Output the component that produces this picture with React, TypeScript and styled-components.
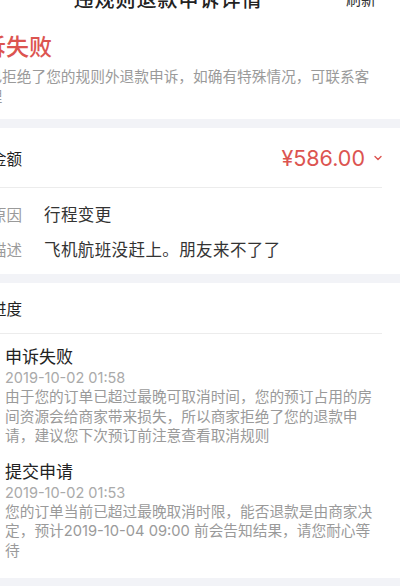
import styled, { createGlobalStyle } from "styled-components";

const GlobalStyle = createGlobalStyle`
  html, body {
    margin: 0;
    padding: 0;
    background: #f2f3f7;
    overflow-x: hidden;
  }
  body {
    font-family: Inter, "Noto Sans CJK SC", sans-serif;
    color: #222;
  }
`;

const Page = styled.div`
  margin-left: -56px;
  width: calc(100% + 56px);
  display: flex;
  flex-direction: column;
  gap: 9px;
`;

const Top = styled.div`
  background: #fff;
  margin-top: -24px;
`;

const NavBar = styled.div`
  height: 44px;
  display: grid;
  grid-template-columns: 1fr auto 1fr;
  align-items: center;
  padding: 0 24px 0 16px;
`;

const NavTitle = styled.div`
  font-size: 20px;
  letter-spacing: 1px;
  color: #222;
  font-weight: 500;
`;

const NavAction = styled.div`
  justify-self: end;
  font-size: 15px;
  color: #333;
`;

const Status = styled.div`
  padding: 12px 18px 12px 16px;
`;

const StatusTitle = styled.div`
  font-size: 23px;
  line-height: 30px;
  color: #dc5450;
  font-weight: 500;
`;

const StatusText = styled.div`
  margin: 5px 0 0 -2px;
  font-size: 14.7px;
  line-height: 20px;
  color: #9a9a9a;
`;

const Card = styled.div`
  background: #fff;
  padding: 0 18px 0 16px;
`;

const HeadRow = styled.div<{ $height: number }>`
  height: ${(p) => p.$height}px;
  display: flex;
  align-items: center;
  justify-content: space-between;
  border-bottom: 1px solid #ececec;
`;

const HeadLabel = styled.div`
  font-size: 15.5px;
  color: #222;
`;

const Amount = styled.div`
  display: flex;
  align-items: center;
  gap: 9px;
  color: #dc5450;
  font-size: 21.5px;
`;

const Rows = styled.div`
  padding: 8px 0;
`;

const Row = styled.div`
  display: flex;
  align-items: center;
  height: 35px;
`;

const RowLabel = styled.div`
  width: 84px;
  flex-shrink: 0;
  font-size: 15.5px;
  color: #9a9a9a;
`;

const RowValue = styled.div`
  font-size: 16.5px;
  letter-spacing: 0.4px;
  color: #333;
`;

const Timeline = styled.div`
  padding: 12px 0 17px;
  display: flex;
  flex-direction: column;
  gap: 14px;
`;

const Step = styled.div`
  display: grid;
  grid-template-columns: 45px 1fr;
`;

const Dot = styled.span<{ $active?: boolean }>`
  width: 8px;
  height: 8px;
  margin-top: 7px;
  border-radius: 50%;
  background: ${(p) => (p.$active ? "#dc5450" : "#ccc")};
`;

const StepTitle = styled.div`
  font-size: 17px;
  line-height: 22px;
  color: #222;
`;

const StepTime = styled.div`
  font-size: 14.5px;
  line-height: 19px;
  color: #aaa;
`;

const StepText = styled.div`
  margin-top: 1px;
  font-size: 14.7px;
  line-height: 19.5px;
  color: #9a9a9a;
`;

const steps = [
  {
    title: "申诉失败",
    time: "2019-10-02 01:58",
    text: "由于您的订单已超过最晚可取消时间，您的预订占用的房间资源会给商家带来损失，所以商家拒绝了您的退款申请，建议您下次预订前注意查看取消规则",
    active: true,
  },
  {
    title: "提交申请",
    time: "2019-10-02 01:53",
    text: "您的订单当前已超过最晚取消时限，能否退款是由商家决定，预计2019-10-04 09:00 前会告知结果，请您耐心等待",
  },
];

function Chevron() {
  return (
    <svg width="8" height="6" viewBox="0 0 8 6" fill="none">
      <path d="M1 1.5 L4 4.5 L7 1.5" stroke="#dc5450" strokeWidth="1.4" strokeLinecap="round" strokeLinejoin="round" />
    </svg>
  );
}

export default function App() {
  return (
    <>
      <GlobalStyle />
      <Page>
        <Top>
          <NavBar>
            <span />
            <NavTitle>违规则退款申诉详情</NavTitle>
            <NavAction>刷新</NavAction>
          </NavBar>
          <Status>
            <StatusTitle>申诉失败</StatusTitle>
            <StatusText>
              商家已拒绝了您的规则外退款申诉，如确有特殊情况，可联系客服处理
            </StatusText>
          </Status>
        </Top>

        <Card>
          <HeadRow $height={59}>
            <HeadLabel>退款金额</HeadLabel>
            <Amount>
              ¥586.00
              <Chevron />
            </Amount>
          </HeadRow>
          <Rows>
            <Row>
              <RowLabel>申诉原因</RowLabel>
              <RowValue>行程变更</RowValue>
            </Row>
            <Row>
              <RowLabel>申诉描述</RowLabel>
              <RowValue>飞机航班没赶上。朋友来不了了</RowValue>
            </Row>
          </Rows>
        </Card>

        <Card>
          <HeadRow $height={50}>
            <HeadLabel>申诉进度</HeadLabel>
          </HeadRow>
          <Timeline>
            {steps.map((s) => (
              <Step key={s.time}>
                <Dot $active={s.active} />
                <div>
                  <StepTitle>{s.title}</StepTitle>
                  <StepTime>{s.time}</StepTime>
                  <StepText>{s.text}</StepText>
                </div>
              </Step>
            ))}
          </Timeline>
        </Card>
      </Page>
    </>
  );
}
